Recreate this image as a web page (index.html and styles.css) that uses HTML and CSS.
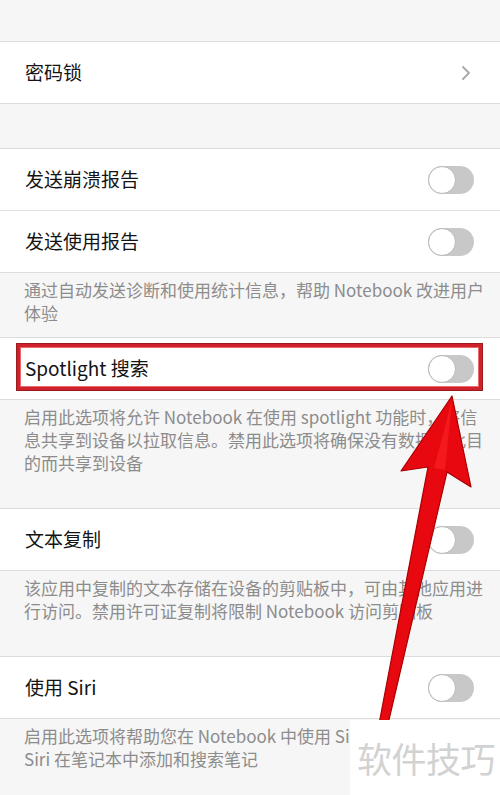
FILE: index.html
```html
<!DOCTYPE html>
<html lang="zh-CN">
<head>
<meta charset="utf-8">
<title>设置</title>
<link rel="stylesheet" href="styles.css">
</head>
<body>
<div class="page">
  <div class="spacer-top"></div>

  <div class="group">
    <div class="row">
      <span class="title">密码锁</span>
      <svg class="chevron" width="10" height="16" viewBox="0 0 10 16"><polyline points="2,2 8,8 2,14" fill="none" stroke="#ababab" stroke-width="2" stroke-linecap="round" stroke-linejoin="round"/></svg>
    </div>
  </div>

  <div class="spacer-mid"></div>

  <div class="group">
    <div class="row">
      <span class="title">发送崩溃报告</span>
      <span class="switch"><span class="knob"></span></span>
    </div>
    <div class="row sep">
      <span class="title">发送使用报告</span>
      <span class="switch"><span class="knob"></span></span>
    </div>
  </div>
  <div class="footer footer-tight">
    <span class="line">通过自动发送诊断和使用统计信息，帮助 Notebook 改进用户</span>
    <span class="line">体验</span>
  </div>

  <div class="group">
    <div class="row highlight-row">
      <span class="title">Spotlight 搜索</span>
      <span class="switch"><span class="knob"></span></span>
      <span class="highlight"></span>
    </div>
  </div>
  <div class="footer">
    <span class="line">启用此选项将允许 Notebook 在使用 spotlight 功能时，将信</span>
    <span class="line">息共享到设备以拉取信息。禁用此选项将确保没有数据为此目</span>
    <span class="line">的而共享到设备</span>
  </div>

  <div class="group">
    <div class="row">
      <span class="title">文本复制</span>
      <span class="switch"><span class="knob"></span></span>
    </div>
  </div>
  <div class="footer">
    <span class="line">该应用中复制的文本存储在设备的剪贴板中，可由其他应用进</span>
    <span class="line">行访问。禁用许可证复制将限制 Notebook 访问剪贴板</span>
  </div>

  <div class="group">
    <div class="row">
      <span class="title">使用 Siri</span>
      <span class="switch"><span class="knob"></span></span>
    </div>
  </div>
  <div class="footer">
    <span class="line">启用此选项将帮助您在 Notebook 中使用 Si</span>
    <span class="line">Siri 在笔记本中添加和搜索笔记</span>
  </div>

  <svg class="arrow" width="500" height="795" viewBox="0 0 500 795">
    <polygon points="452,396 471,487 447,472 388,724 379,724 428,467 401,471" fill="#e8080f" stroke="#a80000" stroke-width="1.2" stroke-linejoin="round"/>
    <polygon points="452,400 445,470 434,468" fill="#ff2a2a" opacity="0.5"/>
  </svg>

  <div class="watermark">软件技巧</div>
</div>
</body>
</html>
```

FILE: styles.css
```css
html, body {
  margin: 0;
  padding: 0;
}
body {
  background: #f6f6f6;
  font-family: "Noto Sans CJK SC", "Noto Sans", sans-serif;
  overflow: hidden;
}
.page {
  position: relative;
  width: 500px;
  height: 795px;
  overflow: hidden;
}
.spacer-top {
  height: 41px;
}
.spacer-mid {
  height: 44px;
}
.group {
  background: #ffffff;
  border-top: 1px solid #dcdcdc;
  border-bottom: 1px solid #dcdcdc;
}
.row {
  position: relative;
  height: 61px;
  padding: 0 26px 0 25px;
  display: flex;
  align-items: center;
  justify-content: space-between;
}
.row.sep {
  border-top: 1px solid #e0e0e0;
}
.title {
  font-size: 19px;
  color: #141414;
  line-height: 1;
  margin-top: -2px;
}
.chevron {
  margin-right: 3px;
}
.switch {
  position: relative;
  width: 46px;
  height: 28px;
  border-radius: 14px;
  background: #c8c8c8;
  box-sizing: border-box;
}
.knob {
  position: absolute;
  left: 0;
  top: 0;
  width: 28px;
  height: 28px;
  border-radius: 50%;
  background: #ffffff;
  border: 1.5px solid #b9b9b9;
  box-sizing: border-box;
}
.footer {
  padding: 5px 16px 34px 24px;
  font-size: 17px;
  line-height: 23px;
  color: #8c8c8c;
}
.footer-tight {
  padding-bottom: 13px;
}
.line {
  display: block;
  white-space: nowrap;
}
.highlight {
  position: absolute;
  left: 17px;
  top: 6px;
  width: 465px;
  height: 46px;
  box-sizing: border-box;
  border: 3px solid #d0202c;
  box-shadow: 0 0 0 1px #9a1b1b, inset 0 0 0 1px #e86a6a;
}
.arrow {
  position: absolute;
  left: 0;
  top: 0;
  pointer-events: none;
}
.watermark {
  position: absolute;
  left: 350px;
  top: 720px;
  width: 150px;
  height: 75px;
  background: #ffffff;
  color: #d2d2d2;
  font-size: 35px;
  line-height: 75px;
  padding-left: 7px;
  box-sizing: border-box;
  white-space: nowrap;
  letter-spacing: -0.5px;
}
```
